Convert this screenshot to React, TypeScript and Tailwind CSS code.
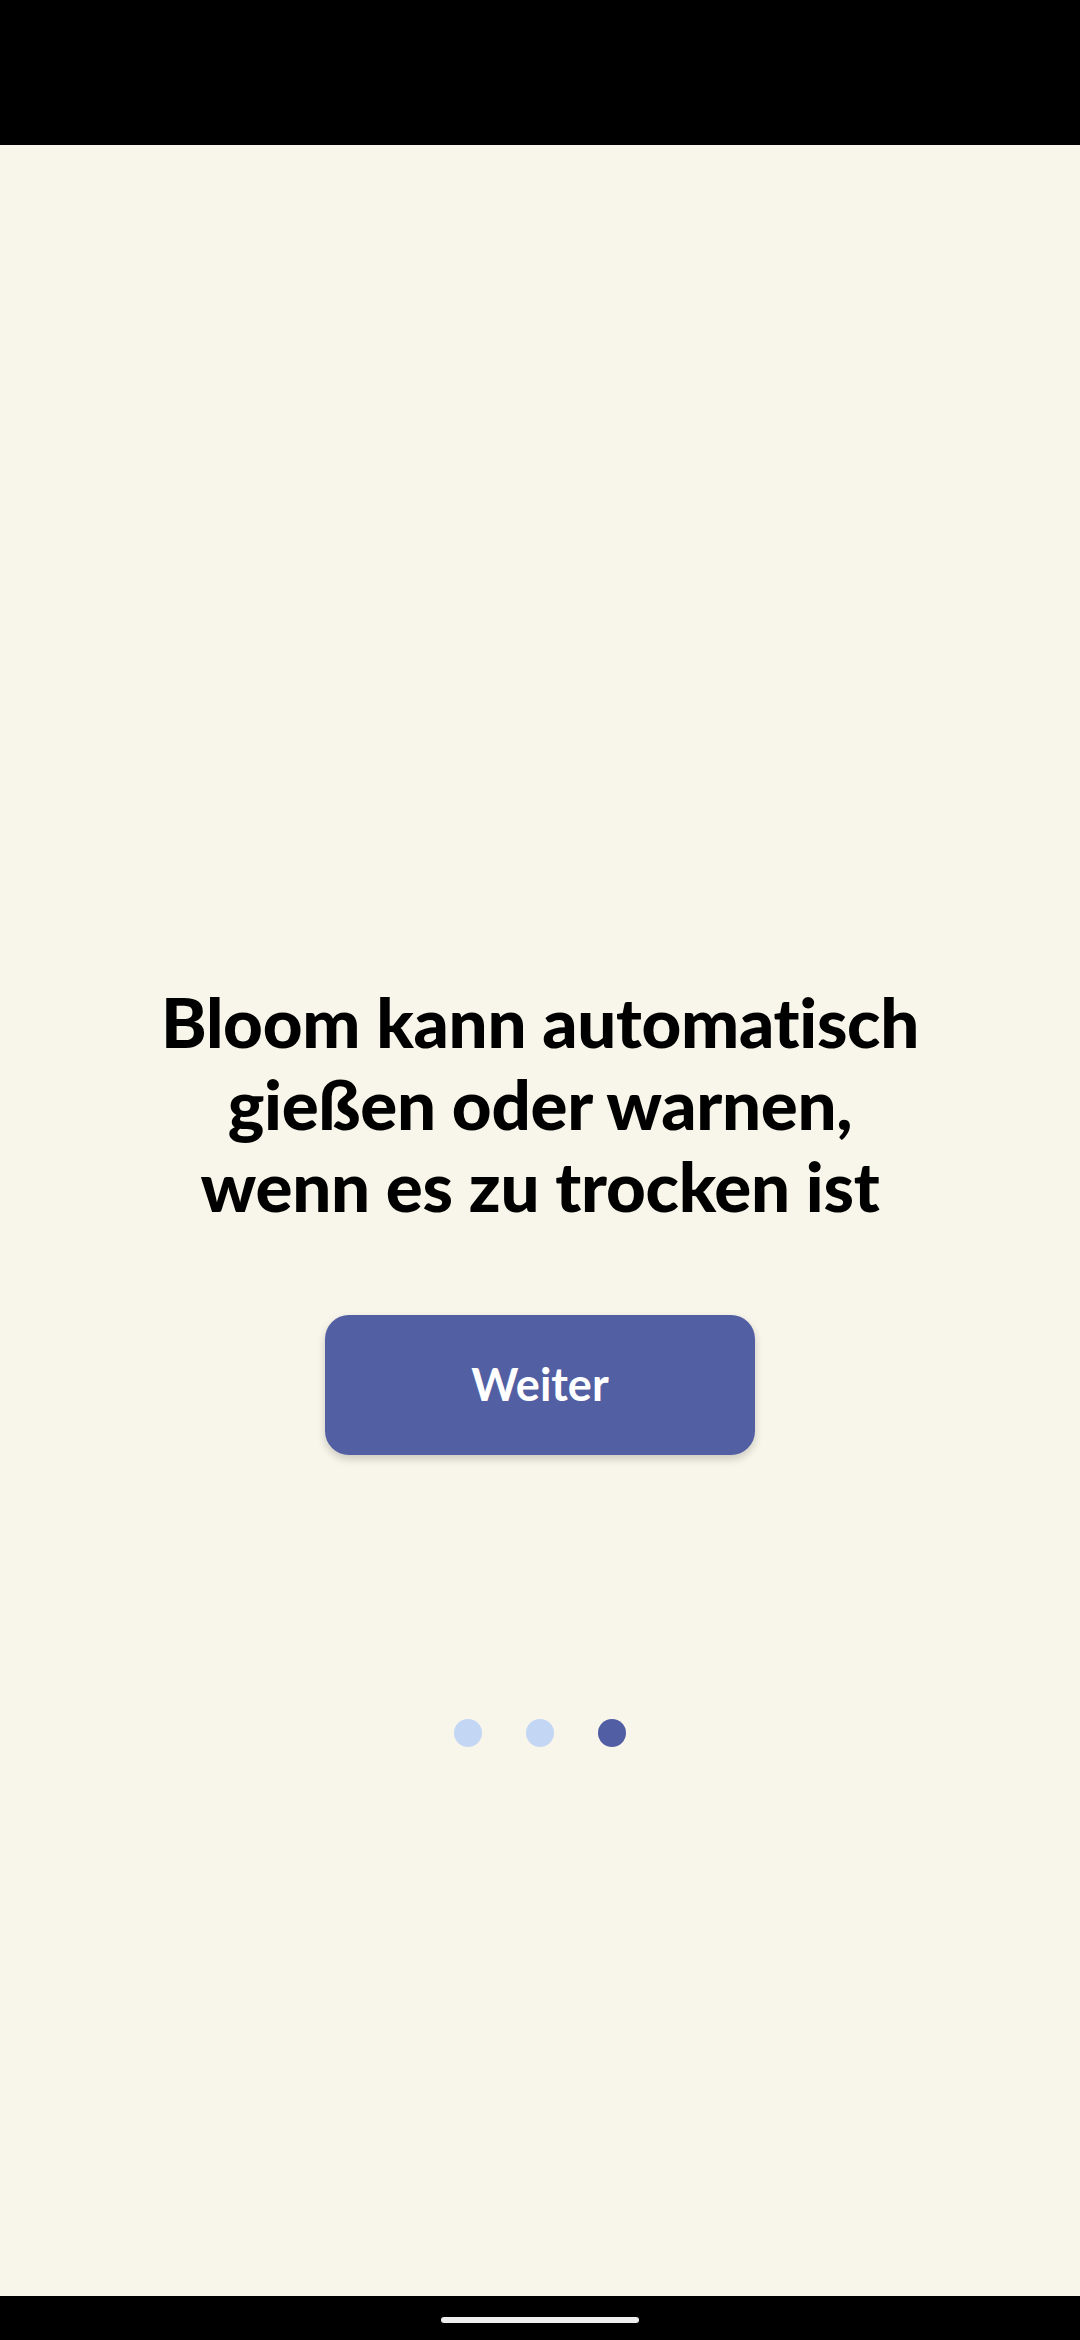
import React from "react";

export default function App() {
  return (
    <div className="w-[1080px] h-[2340px] flex flex-col bg-[#F8F6EA]" style={{ fontFamily: "Lato, 'Open Sans', sans-serif" }}>
      <div className="h-[145px] bg-black shrink-0" />
      <div className="flex-1 flex flex-col items-center pt-[836px]">
        <h1 className="text-[69px] leading-[82px] font-black text-black text-center tracking-[-0.3px]">
          Bloom kann automatisch
          <br />
          gießen oder warnen,
          <br />
          wenn es zu trocken ist
        </h1>
        <button className="mt-[88px] w-[430px] h-[140px] rounded-[24px] bg-[#535FA3] text-white text-[45px] font-bold shadow-[0_4px_8px_rgba(0,0,0,0.18)]">
          Weiter
        </button>
        <div className="mt-[264px] flex gap-[44px]">
          <div className="w-[28px] h-[28px] rounded-full bg-[#C3D7F5]" />
          <div className="w-[28px] h-[28px] rounded-full bg-[#C3D7F5]" />
          <div className="w-[28px] h-[28px] rounded-full bg-[#525EA4]" />
        </div>
      </div>
      <div className="h-[44px] bg-black shrink-0 flex items-start justify-center pt-[21px]">
        <div className="w-[198px] h-[6px] rounded-full bg-[#EEEEEE]" />
      </div>
    </div>
  );
}
